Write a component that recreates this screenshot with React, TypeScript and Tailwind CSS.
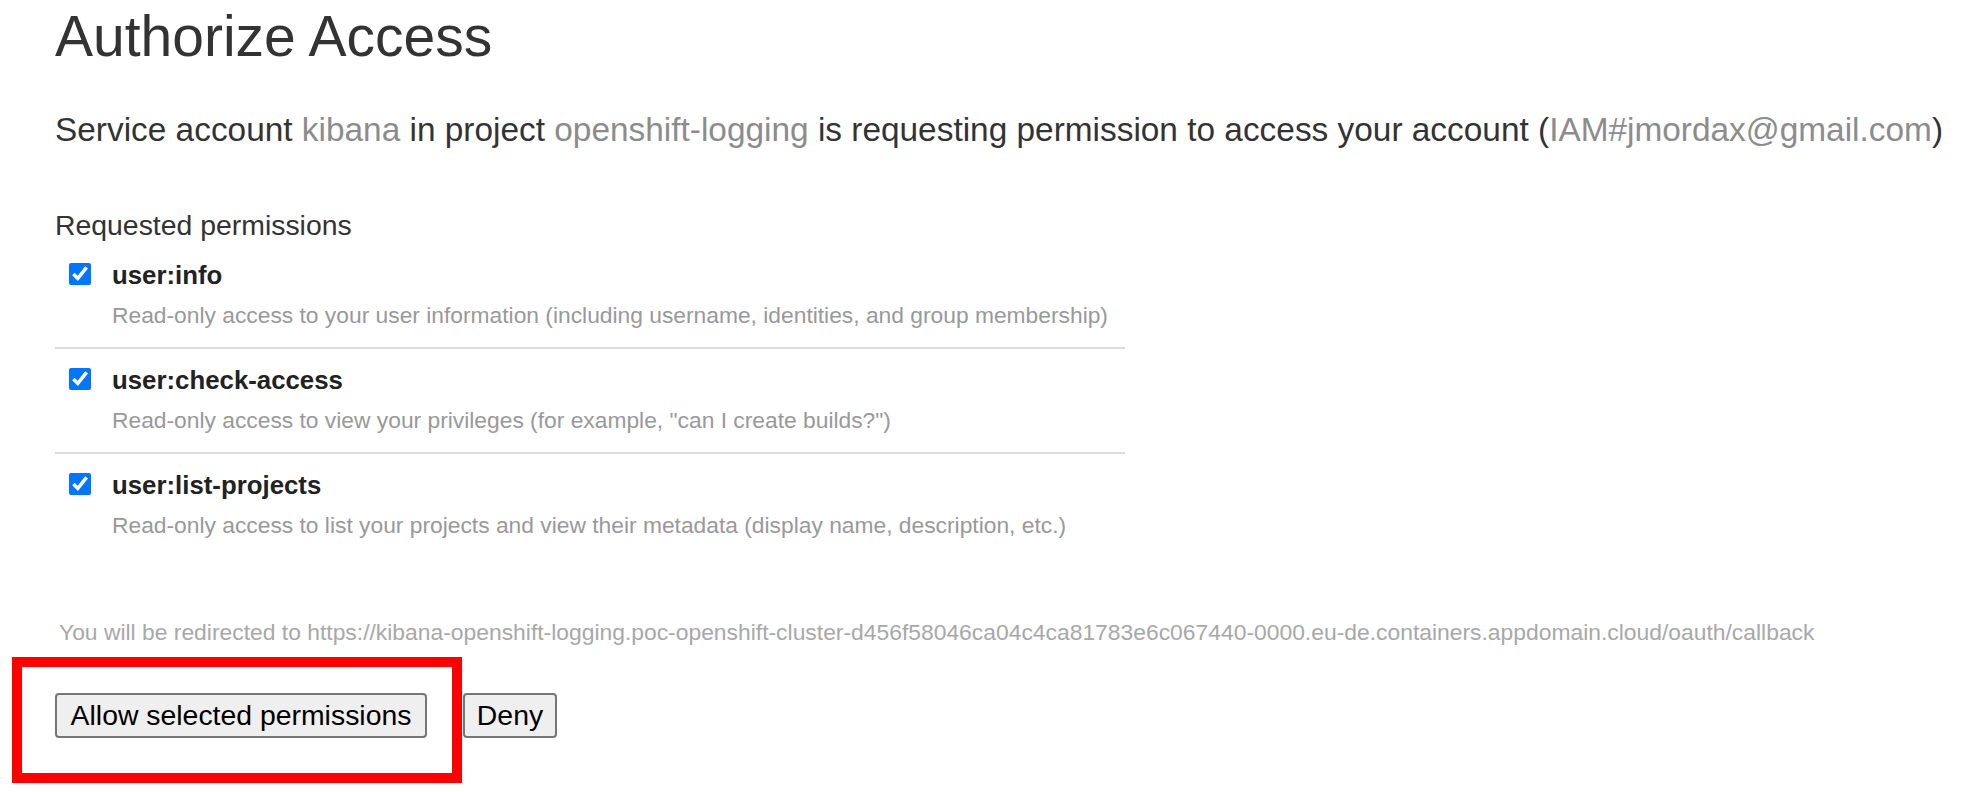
import React from "react";

const perms = [
  {
    name: "user:info",
    desc: "Read-only access to your user information (including username, identities, and group membership)",
    divider: true,
  },
  {
    name: "user:check-access",
    desc: 'Read-only access to view your privileges (for example, "can I create builds?")',
    divider: true,
  },
  {
    name: "user:list-projects",
    desc: "Read-only access to list your projects and view their metadata (display name, description, etc.)",
    divider: false,
  },
];

export default function App() {
  return (
    <div
      className="relative w-[1974px] h-[792px] bg-white overflow-hidden"
      style={{ fontFamily: '"Liberation Sans", Arial, sans-serif' }}
    >
      <div className="pl-[55px] pt-[4px] flex flex-col">
        <h1 className="text-[57px] leading-[64px] text-[#333] font-normal">Authorize Access</h1>
        <p className="mt-[42px] text-[33.4px] leading-[40px] text-[#333] whitespace-nowrap">
          Service account <span className="text-[#8c8c8c]">kibana</span> in project{" "}
          <span className="text-[#8c8c8c]">openshift-logging</span> is requesting permission to access your account (
          <span className="text-[#8c8c8c]">IAM#jmordax@gmail.com</span>)
        </p>
        <h3 className="mt-[59px] text-[28.4px] leading-[32px] text-[#333] font-normal">Requested permissions</h3>
        <div className="mt-[3px] flex flex-col w-[1070px]">
          {perms.map((p) => (
            <div
              key={p.name}
              className={
                p.divider
                  ? "flex pt-[16px] pb-[18px] border-b-2 border-[#dcdcdc]"
                  : "flex pt-[16px] pb-[18px]"
              }
            >
              <input
                type="checkbox"
                defaultChecked
                className="ml-[14px] mt-[3px] w-[22px] h-[22px] m-0 accent-[#0075ff] shrink-0"
              />
              <div className="ml-[21px] flex flex-col">
                <span className="text-[25.8px] leading-[30px] font-bold text-[#222]">{p.name}</span>
                <span className="mt-[11px] text-[22.8px] leading-[28px] text-[#999] whitespace-nowrap">{p.desc}</span>
              </div>
            </div>
          ))}
        </div>
        <p className="mt-[61px] ml-[4px] text-[22.86px] leading-[28px] text-[#a8a8a8] whitespace-nowrap">
          You will be redirected to https://kibana-openshift-logging.poc-openshift-cluster-d456f58046ca04c4ca81783e6c067440-0000.eu-de.containers.appdomain.cloud/oauth/callback
        </p>
        <div className="mt-[47px] flex">
          <button className="w-[372px] h-[45px] flex items-center justify-center bg-[#efefef] border-2 border-[#767676] rounded-[4px] text-[28.4px] text-black">
            Allow selected permissions
          </button>
          <button className="ml-[36px] w-[94px] h-[45px] flex items-center justify-center bg-[#efefef] border-2 border-[#767676] rounded-[4px] text-[28.4px] text-black">
            Deny
          </button>
        </div>
      </div>
      <div className="absolute left-[12px] top-[657px] w-[450px] h-[126px] border-[10px] border-[#ff0000] pointer-events-none" />
    </div>
  );
}
